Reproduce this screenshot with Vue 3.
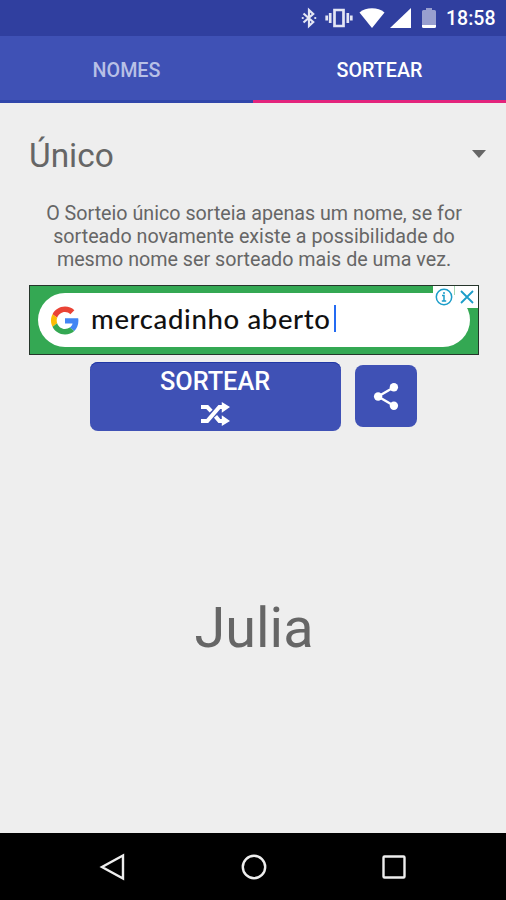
<template>
  <main class="app">
    <header class="status">
      <svg class="bluetooth" viewBox="0 0 16 20">
        <path d="M2.5 5.5 12.2 14 8 18V2l4.2 4L2.500 14.500" />
        <path d="M1.700 10h.1M14.200 10h.1" stroke-linecap="round" />
      </svg>
      <svg class="vibrate" viewBox="0 0 28 20">
        <path d="M9.500 2h9v16h-9zM5.200 5v10M22.800 5v10M1.700 7.500v5M26.300 7.500v5" />
      </svg>
      <svg class="wifi" viewBox="0 0 26 20">
        <path d="M13 20 .5 4.500C4 1.700 8.200 .3 13 .3s9 1.400 12.500 4.200z" />
      </svg>
      <svg class="signal" viewBox="0 0 21 20">
        <path d="M0 20 21 0v20z" />
      </svg>
      <svg class="battery" viewBox="0 0 14 20">
        <path d="M0 3.500Q0 2 1.500 2H4V0h6v2h2.500Q14 2 14 3.500V17H0z" opacity=".5" />
        <path d="M0 17h14v1.500q0 1.500-1.500 1.500h-11Q0 20 0 18.500z" />
      </svg>
      <span class="clock">18:58</span>
    </header>

    <nav class="tabs">
      <button
        v-for="(tab, index) in tabs"
        :key="tab"
        :class="['tab', { active: index === currentTab }]"
        @click="currentTab = index"
      >
        {{ tab }}
      </button>
    </nav>

    <section class="content">
      <div class="spinner">
        <span>Único</span>
        <svg viewBox="0 0 14 8"><path d="M0 0h14L7 8z" /></svg>
      </div>

      <p class="description">
        O Sorteio único sorteia apenas um nome, se for<br />
        sorteado novamente existe a possibilidade do<br />
        mesmo nome ser sorteado mais de uma vez.
      </p>

      <div class="ad">
        <div class="search">
          <svg class="google" viewBox="0 0 48 48">
            <path fill="#ea4335" d="M24 9.500c3.540 0 6.710 1.220 9.210 3.600l6.850-6.850C35.900 2.380 30.470 0 24 0 14.620 0 6.510 5.380 2.560 13.220l7.980 6.190C12.430 13.720 17.740 9.500 24 9.500z" />
            <path fill="#4285f4" d="M46.980 24.550c0-1.570-.15-3.090-.38-4.550H24v9.020h12.940c-.58 2.960-2.260 5.480-4.780 7.180l7.730 6c4.510-4.180 7.090-10.360 7.090-17.650z" />
            <path fill="#fbbc05" d="M10.530 28.590c-.48-1.450-.76-2.990-.76-4.590s.27-3.140.76-4.590l-7.980-6.190C.92 16.460 0 20.120 0 24c0 3.880.92 7.540 2.560 10.780l7.970-6.190z" />
            <path fill="#34a853" d="M24 48c6.480 0 11.930-2.130 15.890-5.810l-7.730-6c-2.150 1.450-4.920 2.300-8.160 2.300-6.260 0-11.570-4.220-13.470-9.910l-7.980 6.190C6.510 42.620 14.620 48 24 48z" />
          </svg>
          <span class="query">mercadinho aberto</span>
          <span class="cursor"></span>
        </div>
        <div class="ad-choices">
          <svg class="info" viewBox="0 0 18 18">
            <circle cx="9" cy="9" r="7.700" />
            <path d="M7 7.500h2V13M6.800 13h4.400M9 4v2" />
          </svg>
          <span class="divider"></span>
          <svg class="close" viewBox="0 0 14 14"><path d="m1 1 12 12M13 1 1 13" /></svg>
        </div>
      </div>

      <div class="actions">
        <button class="draw" @click="draw">
          <span>SORTEAR</span>
          <svg viewBox="0 0 30 24">
            <path d="M0 4.800h6.500l4 4.200M0 19.200h6.500L19 4.800h4M15 14.500l4 4.700h4" />
            <path class="heads" d="m21.500-.5 8.500 5.300-8.500 6zM21.500 13.200l8.500 6-8.500 5.300z" />
          </svg>
        </button>
        <button class="share">
          <svg viewBox="0 0 28 30">
            <path d="M22.500 5 5.500 15l17 10" />
            <circle cx="22.500" cy="5" r="4.500" />
            <circle cx="5.500" cy="15" r="4.500" />
            <circle cx="22.500" cy="25" r="4.500" />
          </svg>
        </button>
      </div>

      <div class="result">{{ names[drawn] }}</div>
    </section>

    <footer class="navbar">
      <svg viewBox="0 0 28 28"><path d="M24 2.500v23L3 14z" /></svg>
      <svg viewBox="0 0 28 28"><circle cx="14" cy="14" r="11.200" /></svg>
      <svg viewBox="0 0 28 28"><rect x="3.500" y="3.500" width="21" height="21" rx="1" /></svg>
    </footer>
  </main>
</template>

<script setup>
import { ref } from 'vue'

const tabs = ['NOMES', 'SORTEAR']
const currentTab = ref(1)

const names = ref(['Julia'])
const drawn = ref(0)

const draw = () => {
  drawn.value = Math.floor(Math.random() * names.value.length)
}
</script>

<style>
body {
  margin: 0;
  background-color: #eee;
}
</style>

<style scoped>
* {
  box-sizing: border-box;
}
svg {
  display: block;
  flex: none;
  overflow: visible;
}
button {
  border: none;
  padding: 0;
  font-family: inherit;
  cursor: pointer;
}
.app {
  display: flex;
  flex-direction: column;
  width: 506px;
  height: 900px;
  background-color: #eee;
  color: #666;
  font-family: Roboto, "Liberation Sans", sans-serif;
}
.status {
  display: flex;
  align-items: center;
  justify-content: flex-end;
  height: 36px;
  padding-right: 11px;
  background-color: #303f9f;
  color: #fff;
  fill: #fff;
}
.bluetooth {
  width: 16px;
  height: 20px;
  fill: none;
  stroke: #e4e6f4;
  stroke-width: 2.2;
}
.vibrate {
  width: 28px;
  height: 20px;
  margin-left: 8px;
  fill: none;
  stroke: #e4e6f4;
  stroke-width: 2.7;
}
.wifi {
  width: 26px;
  height: 20px;
  margin-left: 6px;
}
.signal {
  width: 21px;
  height: 20px;
  margin-left: 5px;
}
.battery {
  width: 14px;
  height: 20px;
  margin-left: 11px;
}
.clock {
  width: 49px;
  margin-left: 10px;
  margin-top: 1px;
  font-size: 19.5px;
  font-weight: 500;
  white-space: nowrap;
}
.tabs {
  display: flex;
  height: 67px;
  background-color: #3f51b5;
}
.tab {
  flex: 1;
  padding-top: 5px;
  border-bottom: 3px solid #3046aa;
  background: none;
  color: #b8c0e6;
  font-size: 19.7px;
  font-weight: 500;
}
.tab.active {
  border-color: #e3237c;
  color: #fff;
}
.content {
  flex: 1;
  display: flex;
  flex-direction: column;
  padding: 0 27px 0 29px;
}
.spinner {
  display: flex;
  align-items: center;
  justify-content: space-between;
  height: 99px;
  padding-top: 6px;
  margin-right: -7px;
  font-size: 33.4px;
}
.spinner svg {
  width: 14px;
  height: 8px;
  margin-top: -3px;
  fill: #666;
}
.description {
  margin: 0;
  font-size: 19.7px;
  line-height: 23px;
  text-align: center;
  white-space: nowrap;
}
.ad {
  position: relative;
  height: 70px;
  margin-top: 14px;
  padding: 7px 8px;
  border: 1px solid #26352b;
  background-color: #34a853;
}
.search {
  display: flex;
  align-items: center;
  height: 54px;
  padding-left: 13px;
  border-radius: 27px;
  background-color: #fff;
}
.google {
  width: 28px;
  height: 29px;
}
.query {
  width: 240px;
  margin-top: -3px;
  margin-left: 12px;
  color: #111;
  font-family: Lato, sans-serif;
  font-size: 27.5px;
  font-weight: 500;
  letter-spacing: 0.65px;
  white-space: nowrap;
}
.cursor {
  width: 2px;
  height: 27px;
  margin-top: -4px;
  margin-left: 3px;
  background-color: #246bf2;
}
.ad-choices {
  position: absolute;
  top: 0;
  right: 0;
  display: flex;
  align-items: center;
  width: 45px;
  height: 22px;
  padding-left: 2px;
  background-color: #fff;
  fill: none;
  stroke: #1b9dc9;
}
.info {
  width: 18px;
  height: 18px;
  stroke-width: 1.5;
}
.divider {
  align-self: flex-start;
  width: 1px;
  height: 9px;
  margin-left: 1px;
  background-color: #a5d8b2;
}
.close {
  width: 14px;
  height: 14px;
  margin-left: 5px;
  stroke-width: 1.8;
}
.actions {
  display: flex;
  align-items: center;
  justify-content: center;
  gap: 14px;
  height: 69px;
  margin-top: 7px;
  padding-right: 2px;
}
.draw {
  display: flex;
  flex-direction: column;
  align-items: center;
  width: 251px;
  height: 69px;
  padding-top: 5px;
  border-radius: 8px;
  background-color: #3f51b5;
  box-shadow: inset 0 1px #2138a6;
  color: #fff;
  font-size: 25.3px;
  font-weight: 500;
  line-height: 30px;
}
.draw svg {
  width: 29px;
  height: 24px;
  margin-top: 5px;
  fill: none;
  stroke: #fff;
  stroke-width: 4.2;
}
.draw .heads {
  fill: #fff;
  stroke: none;
}
.share {
  display: grid;
  place-items: center;
  width: 62px;
  height: 62px;
  margin-top: -1px;
  border-radius: 8px;
  background-color: #3f51b5;
}
.share svg {
  width: 26px;
  height: 29px;
  fill: #fff;
}
.share path {
  fill: none;
  stroke: #fff;
  stroke-width: 2.6;
}
.result {
  flex: 1;
  display: flex;
  align-items: center;
  justify-content: center;
  padding-bottom: 9px;
  font-size: 55.8px;
}
.navbar {
  display: flex;
  align-items: center;
  justify-content: space-between;
  height: 67px;
  padding: 0 98px 0 99px;
  background-color: #000;
  fill: none;
  stroke: #eee;
  stroke-width: 2.4;
}
.navbar svg {
  width: 28px;
  height: 28px;
}
</style>
